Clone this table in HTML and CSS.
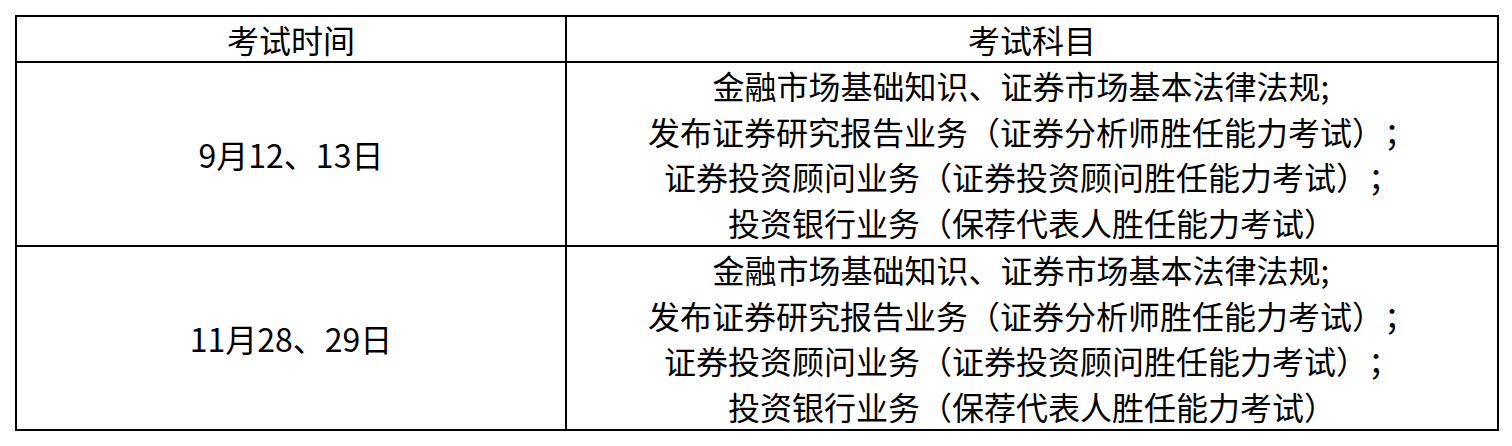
FILE: index.html
```html
<!DOCTYPE html>
<html lang="zh-CN">
<head>
<meta charset="utf-8">
<link rel="stylesheet" href="styles.css">
</head>
<body>
<table class="schedule">
  <colgroup>
    <col class="col-time">
    <col class="col-subject">
  </colgroup>
  <thead>
    <tr class="head-row">
      <th>考试时间</th>
      <th>考试科目</th>
    </tr>
  </thead>
  <tbody>
    <tr class="body-row">
      <td class="time">9月12、13日</td>
      <td class="subjects">
        <div class="line">金融市场基础知识、证券市场基本法律法规;<span class="tail"></span></div>
        <div class="line">发布证券研究报告业务（证券分析师胜任能力考试）；</div>
        <div class="line">证券投资顾问业务（证券投资顾问胜任能力考试）；</div>
        <div class="line">投资银行业务（保荐代表人胜任能力考试）</div>
      </td>
    </tr>
    <tr class="body-row">
      <td class="time">11月28、29日</td>
      <td class="subjects">
        <div class="line">金融市场基础知识、证券市场基本法律法规;<span class="tail"></span></div>
        <div class="line">发布证券研究报告业务（证券分析师胜任能力考试）；</div>
        <div class="line">证券投资顾问业务（证券投资顾问胜任能力考试）；</div>
        <div class="line">投资银行业务（保荐代表人胜任能力考试）</div>
      </td>
    </tr>
  </tbody>
</table>
</body>
</html>
```
FILE: styles.css
```css
html, body {
  margin: 0;
  padding: 0;
  background: #fff;
}
body {
  padding: 15px 0 0 15px;
  font-family: "Noto Sans CJK SC", "Noto Sans", sans-serif;
  color: #000;
}
.schedule {
  border-collapse: collapse;
  table-layout: fixed;
  width: 1482px;
  font-size: 32px;
  text-spacing-trim: space-all;
}
.col-time { width: 550px; }
.col-subject { width: 932px; }
.schedule th,
.schedule td {
  border: 2px solid #000;
  padding: 0;
  text-align: center;
  vertical-align: middle;
  font-weight: normal;
}
.head-row { height: 46px; }
.head-row th { line-height: 44px; }
.body-row { height: 184px; }
.subjects .line {
  line-height: 45.5px;
  white-space: nowrap;
}
.tail {
  display: inline-block;
  width: 22px;
}
```
